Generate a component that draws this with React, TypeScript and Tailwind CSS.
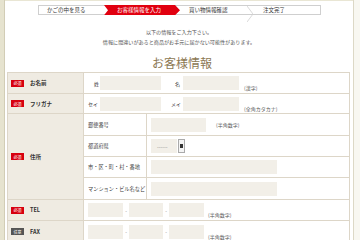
import React from 'react';

const jp = { fontFamily: '"Noto Sans CJK JP", "Noto Sans", sans-serif' };

const Badge = ({ optional = false }: { optional?: boolean }) => (
  <span
    className={`inline-flex items-center justify-center w-[13px] h-[7px] text-[4px] leading-none text-white ${
      optional ? 'bg-[#555555]' : 'bg-[#d7000f]'
    }`}
  >
    {optional ? '任意' : '必須'}
  </span>
);

const Input = ({ w }: { w: string }) => <div className={`${w} h-[14px] bg-[#f2efe8]`} />;

const Label = ({ text, optional = false }: { text: string; optional?: boolean }) => (
  <div className="w-[76px] shrink-0 bg-[#efebe2] border-r border-[#ddd6c8] flex items-center pl-[3px] gap-[6px]">
    <Badge optional={optional} />
    <span className="text-[5.5px] font-bold text-[#333]">{text}</span>
  </div>
);

const Note = ({ text }: { text: string }) => (
  <span className="text-[5px] text-[#555]">{text}</span>
);

const SubRow = ({ label, h, children, last = false }: { label: string; h: string; children: React.ReactNode; last?: boolean }) => (
  <div className={`flex ${h} ${last ? '' : 'border-b border-[#ddd6c8]'}`}>
    <div className="w-[63px] shrink-0 border-r border-[#ddd6c8] flex items-center pl-[4px] text-[5.2px] text-[#444] whitespace-nowrap">
      {label}
    </div>
    <div className="flex-1 flex items-center pl-[4px] gap-[10px]">{children}</div>
  </div>
);

const Phone = () => (
  <div className="flex items-center">
    <Input w="w-[35px]" />
    <span className="w-[6px] text-center text-[5px] text-[#777]">-</span>
    <Input w="w-[34px]" />
    <span className="w-[6px] text-center text-[5px] text-[#777]">-</span>
    <Input w="w-[35px]" />
    <span className="ml-[4px]"><Note text="(半角数字)" /></span>
  </div>
);

export default function App() {
  return (
    <div className="w-[360px] h-[240px] overflow-hidden flex bg-[#e9e6d4]" style={jp}>
      <div className="w-[5px] shrink-0 bg-[#e6e3cf] border-r border-[#d2cdb6]" />
      <div className="w-[348px] shrink-0 mt-[1px] bg-white flex flex-col">
        {/* steps */}
        <div className="mt-[4px] ml-[33px] w-[283px] h-[18px] border border-[#cfcfcf] flex relative text-[5.5px]">
          <div className="w-[65px] shrink-0 flex items-center pl-[8px] text-[#333]">かごの中を見る</div>
          <div className="w-[73px] shrink-0 relative">
            <div className="absolute inset-y-[-1px] left-0 right-[-3px] bg-[#e1000f] [clip-path:polygon(0_0,calc(100%-5px)_0,100%_50%,calc(100%-5px)_100%,0_100%,4px_50%)] flex items-center pl-[13px] text-white">
              お客様情報を入力
            </div>
          </div>
          <div className="w-[73px] shrink-0 relative flex items-center pl-[12px] text-[#333]">
            買い物情報確認
            <svg className="absolute right-[-3px] top-0" width="6" height="16" viewBox="0 0 6 16">
              <path d="M0 0 L6 8 L0 16" fill="none" stroke="#cfcfcf" strokeWidth="0.8" />
            </svg>
          </div>
          <div className="flex-1 flex items-center pl-[13px] text-[#333]">注文完了</div>
        </div>
        <div className="mt-[12px] flex flex-col items-center text-[5.1px] leading-[10px] text-[#555]">
          <p>以下の情報をご入力下さい。</p>
          <p>情報に間違いがあると商品がお手元に届かない可能性があります。</p>
        </div>
        <h1 className="mt-[9px] text-center text-[12px] leading-[14px] text-[#8c7853] pl-[6px]">お客様情報</h1>
        <div className="mt-[2px] ml-[2px] w-[343px] border border-[#ddd6c8] text-[#333]">
          <div className="flex h-[21px] border-b border-[#ddd6c8]">
            <Label text="お名前" />
            <div className="flex-1 flex items-center pl-[10px]">
              <span className="text-[5px] w-[6px]">姓</span>
              <Input w="w-[61px]" />
              <span className="text-[5px] ml-[14px] w-[8px]">名</span>
              <Input w="w-[56px]" />
              <span className="ml-[5px]"><Note text="(漢字)" /></span>
            </div>
          </div>
          <div className="flex h-[20px] border-b border-[#ddd6c8]">
            <Label text="フリガナ" />
            <div className="flex-1 flex items-center pl-[4px]">
              <span className="text-[5px] w-[12px]">セイ</span>
              <Input w="w-[61px]" />
              <span className="text-[5px] ml-[10px] w-[12px]">メイ</span>
              <Input w="w-[56px]" />
              <span className="ml-[5px]"><Note text="(全角カタカナ)" /></span>
            </div>
          </div>
          <div className="flex border-b border-[#ddd6c8]">
            <Label text="住所" />
            <div className="flex-1 flex flex-col">
              <SubRow label="郵便番号" h="h-[22px]">
                <Input w="w-[55px]" />
                <Note text="(半角数字)" />
              </SubRow>
              <SubRow label="都道府県" h="h-[21px]">
                <div className="flex items-center h-[14px]">
                  <div className="w-[26px] h-[14px] bg-[#f2efe8] flex items-center pl-[6px] text-[5px] text-[#777]">------</div>
                  <div className="ml-[1px] w-[7px] h-[14px] border border-[#aaa] bg-[#f4f4f4] flex items-center justify-center">
                    <div className="w-[3px] h-[4px] bg-[#333]" />
                  </div>
                </div>
              </SubRow>
              <SubRow label="市・区・町・村・番地" h="h-[21px]">
                <Input w="w-[126px]" />
              </SubRow>
              <SubRow label="マンション・ビル名など" h="h-[21px]" last>
                <Input w="w-[126px]" />
              </SubRow>
            </div>
          </div>
          <div className="flex h-[21px] border-b border-[#ddd6c8]">
            <Label text="TEL" />
            <div className="flex-1 flex items-center pl-[4px]">
              <Phone />
            </div>
          </div>
          <div className="flex h-[21px]">
            <Label text="FAX" optional />
            <div className="flex-1 flex items-center pl-[4px]">
              <Phone />
            </div>
          </div>
        </div>
      </div>
      <div className="flex-1 bg-[#f8f7f1] border-l border-[#dcd8c6]" />
    </div>
  );
}
